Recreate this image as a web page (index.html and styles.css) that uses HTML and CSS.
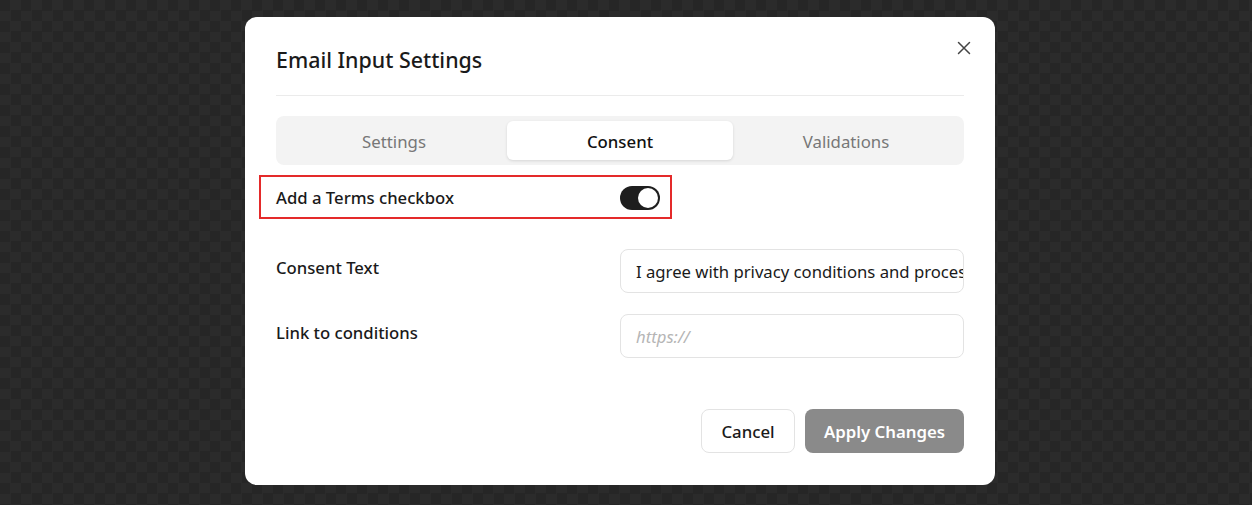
FILE: index.html
```html
<!DOCTYPE html>
<html>
<head>
<meta charset="utf-8">
<link rel="stylesheet" href="styles.css">
</head>
<body>
<div class="backdrop">
  <div class="modal">
    <div class="header">
      <h2 class="title">Email Input Settings</h2>
      <button class="close" aria-label="Close">
        <svg width="14" height="14" viewBox="0 0 14 14"><path d="M1.5 1.5 L12.5 12.5 M12.5 1.5 L1.5 12.5" stroke="#444" stroke-width="1.5" stroke-linecap="round" fill="none"/></svg>
      </button>
    </div>
    <div class="tabs">
      <div class="tab">Settings</div>
      <div class="tab active">Consent</div>
      <div class="tab">Validations</div>
    </div>
    <div class="toggle-row">
      <span class="label">Add a Terms checkbox</span>
      <span class="switch"><span class="knob"></span></span>
    </div>
    <div class="field first">
      <span class="label">Consent Text</span>
      <div class="input">I agree with privacy conditions and processing of my data</div>
    </div>
    <div class="field">
      <span class="label">Link to conditions</span>
      <div class="input placeholder">https://</div>
    </div>
    <div class="actions">
      <button class="btn cancel">Cancel</button>
      <button class="btn apply">Apply Changes</button>
    </div>
  </div>
</div>
</body>
</html>
```
FILE: styles.css
```css
* { box-sizing: border-box; }
html, body { margin: 0; padding: 0; }
body {
  width: 1252px;
  height: 505px;
  overflow: hidden;
  font-family: "Noto Sans", "Open Sans", sans-serif;
  background-color: #262626;
  background-image: conic-gradient(#2b2b2b 25%, transparent 0 50%, #2b2b2b 0 75%, transparent 0);
  background-size: 21px 21px;
}
.backdrop {
  display: flex;
  justify-content: flex-start;
  padding-top: 17px;
  padding-left: 245px;
}
.modal {
  width: 750px;
  height: 468px;
  background: #fff;
  border-radius: 12px;
  padding: 28px 31px 32px;
  position: relative;
}
.header {
  padding-bottom: 20px;
  border-bottom: 1px solid #ebebeb;
}
.title {
  margin: 0;
  font-size: 21.4px;
  line-height: 30px;
  font-weight: 500;
  color: #1a1a1a;
}
.close {
  position: absolute;
  top: 24px;
  right: 24px;
  border: 0;
  background: none;
  padding: 0;
  width: 14px;
  height: 14px;
  display: flex;
}
.tabs {
  margin-top: 20px;
  background: #f3f3f3;
  border-radius: 8px;
  padding: 5px;
  display: flex;
}
.tab {
  flex: 1;
  height: 39px;
  padding-top: 2px;
  display: flex;
  align-items: center;
  justify-content: center;
  font-size: 16.8px;
  color: #777;
  border-radius: 6px;
}
.tab.active {
  background: #fff;
  color: #111;
  font-weight: 500;
  box-shadow: 0 1px 3px rgba(0,0,0,0.12);
}
.toggle-row {
  margin-top: 10px;
  width: 384px;
  height: 44px;
  padding-top: 1px;
  display: flex;
  align-items: center;
  justify-content: space-between;
  position: relative;
}
.toggle-row::after {
  content: "";
  position: absolute;
  left: -17px;
  right: -12px;
  top: 0;
  bottom: 0;
  border: 2px solid #e42a2a;
}
.label {
  font-size: 16.7px;
  color: #1a1a1a;
  font-weight: 500;
}
.switch {
  width: 40px;
  height: 24px;
  border-radius: 12px;
  background: #1e1e1e;
  display: flex;
  align-items: center;
  justify-content: flex-end;
  padding: 2px;
}
.knob {
  width: 20px;
  height: 20px;
  border-radius: 50%;
  background: #fff;
}
.field {
  margin-top: 21px;
  display: flex;
  justify-content: space-between;
  align-items: flex-start;
}
.field.first { margin-top: 30px; }
.field .label {
  line-height: 24px;
  padding-top: 7px;
}
.input {
  width: 344px;
  height: 44px;
  border: 1px solid #e3e3e3;
  border-radius: 8px;
  padding: 0 15px;
  display: flex;
  align-items: center;
  font-size: 16.7px;
  color: #1a1a1a;
  white-space: nowrap;
  overflow: hidden;
}
.input.placeholder {
  color: #b5b5b5;
  font-style: italic;
}
.actions {
  margin-top: 51px;
  display: flex;
  justify-content: flex-end;
  gap: 10px;
}
.btn {
  height: 44px;
  border-radius: 8px;
  font-family: inherit;
  font-size: 16.8px;
  padding: 1px 0 0;
}
.cancel {
  width: 94px;
  background: #fff;
  border: 1px solid #e3e3e3;
  color: #1a1a1a;
  font-weight: 500;
}
.apply {
  width: 159px;
  background: #8a8a8a;
  border: 0;
  color: #fff;
  font-weight: 600;
}
```
